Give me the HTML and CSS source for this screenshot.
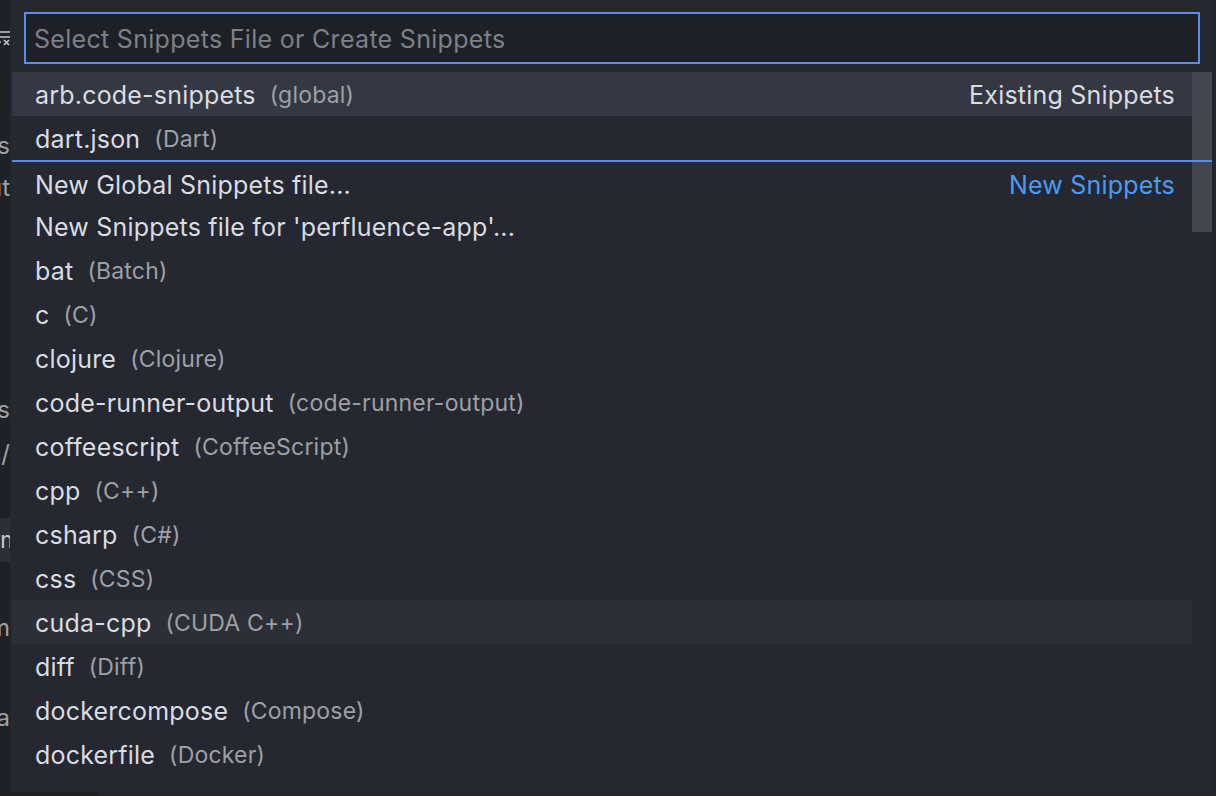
FILE: index.html
```html
<!DOCTYPE html>
<html>
<head>
<meta charset="utf-8">
<link rel="stylesheet" href="styles.css">
</head>
<body>
<div class="app">
  <aside class="sidebar">
    <div class="side-icon">
      <svg width="20" height="20" viewBox="0 0 20 20"><path d="M2 4h16M2 9h16M2 14h7M12 12l5 5M17 12l-5 5" stroke="#c5c8ce" stroke-width="1.6" fill="none"/></svg>
    </div>
    <div class="side-item s1">Snippets</div>
    <div class="side-item s2">Output</div>
    <div class="side-item s3">Results</div>
    <div class="side-item s4">src/</div>
    <div class="side-item s5 active">m</div>
    <div class="side-item s6">m</div>
    <div class="side-item s7">a</div>
  </aside>
  <main class="editor"></main>
</div>

<div class="quick-input">
  <div class="input-wrap">
    <input class="input" type="text" placeholder="Select Snippets File or Create Snippets">
  </div>
  <div class="list">
    <div class="rows">
      <div class="row selected"><span class="label">arb.code-snippets</span><span class="desc">(global)</span><span class="group">Existing Snippets</span></div>
      <div class="row"><span class="label">dart.json</span><span class="desc">(Dart)</span></div>
      <div class="row sep"><span class="label">New Global Snippets file...</span><span class="group link">New Snippets</span></div>
      <div class="row"><span class="label">New Snippets file for 'perfluence-app'...</span></div>
      <div class="row"><span class="label">bat</span><span class="desc">(Batch)</span></div>
      <div class="row"><span class="label">c</span><span class="desc">(C)</span></div>
      <div class="row"><span class="label">clojure</span><span class="desc">(Clojure)</span></div>
      <div class="row"><span class="label">code-runner-output</span><span class="desc">(code-runner-output)</span></div>
      <div class="row"><span class="label">coffeescript</span><span class="desc">(CoffeeScript)</span></div>
      <div class="row"><span class="label">cpp</span><span class="desc">(C++)</span></div>
      <div class="row"><span class="label">csharp</span><span class="desc">(C#)</span></div>
      <div class="row"><span class="label">css</span><span class="desc">(CSS)</span></div>
      <div class="row hover"><span class="label">cuda-cpp</span><span class="desc">(CUDA C++)</span></div>
      <div class="row"><span class="label">diff</span><span class="desc">(Diff)</span></div>
      <div class="row"><span class="label">dockercompose</span><span class="desc">(Compose)</span></div>
      <div class="row"><span class="label">dockerfile</span><span class="desc">(Docker)</span></div>
    </div>
    <div class="scrollbar"><div class="thumb"></div></div>
  </div>
</div>
</body>
</html>
```
FILE: styles.css
```css
html, body {
  margin: 0;
  padding: 0;
  width: 1216px;
  height: 796px;
  overflow: hidden;
  background: #202329;
  font-family: Inter, "Noto Sans", sans-serif;
}
.app {
  display: flex;
  height: 796px;
}
.sidebar {
  width: 98px;
  background: #1f2127;
  position: relative;
  overflow: hidden;
  flex: none;
}
.side-icon {
  position: absolute;
  left: -8px;
  top: 28px;
}
.side-item {
  position: absolute;
  right: 88px;
  font-size: 24px;
  color: #9ea1a7;
  white-space: nowrap;
  line-height: 44px;
}
.s1 { top: 124px; }
.s2 { top: 166px; }
.s3 { top: 388px; }
.s4 { top: 432px; }
.s5 { top: 518px; left: 0; right: 0; text-align: right; padding-right: 88px; background: #2b2f37; color: #c5c8ce; }
.s6 { top: 606px; }
.s7 { top: 696px; }
.editor {
  flex: 1;
  background: #23262d;
}
.quick-input {
  position: absolute;
  left: 10px;
  top: 0;
  width: 1202px;
  height: 792px;
  background: #252830;
  box-sizing: border-box;
  padding-top: 12px;
  display: flex;
  flex-direction: column;
  overflow: hidden;
}
.input-wrap {
  padding: 0 12px 0 14px;
  margin-bottom: 8px;
}
.input {
  display: block;
  box-sizing: border-box;
  width: 100%;
  height: 52px;
  border: 2px solid #5b8de8;
  background: #1e2027;
  color: #d7dae0;
  font-family: inherit;
  font-size: 25px;
  letter-spacing: 0.3px;
  padding: 2px 8px 0;
  outline: none;
}
.input::placeholder {
  color: #7d8088;
}
.list {
  display: flex;
  position: relative;
  padding-left: 2px;
}
.rows {
  flex: 1;
}
.row {
  height: 44px;
  display: flex;
  align-items: center;
  padding: 2px 17px 0 23px;
  box-sizing: border-box;
  font-size: 25px;
  letter-spacing: 0.2px;
  white-space: nowrap;
}
.row.selected {
  background: #343842;
}
.row.hover {
  background: #2c2f37;
}
.row.sep {
  border-top: 2px solid #5b8de8;
  margin-right: -20px;
  padding-right: 37px;
  padding-top: 4px;
  position: relative;
  z-index: 2;
}
.label {
  color: #d9dce2;
}
.desc {
  color: #9da0a7;
  font-size: 23px;
  letter-spacing: 0.2px;
  margin-left: 14px;
}
.group {
  margin-left: auto;
  color: #d9dce2;
}
.group.link {
  color: #4c9bf3;
}
.scrollbar {
  width: 20px;
  flex: none;
  position: relative;
}
.thumb {
  position: absolute;
  top: 0;
  left: 0;
  width: 20px;
  height: 160px;
  background: rgba(100, 106, 118, 0.45);
}
```
